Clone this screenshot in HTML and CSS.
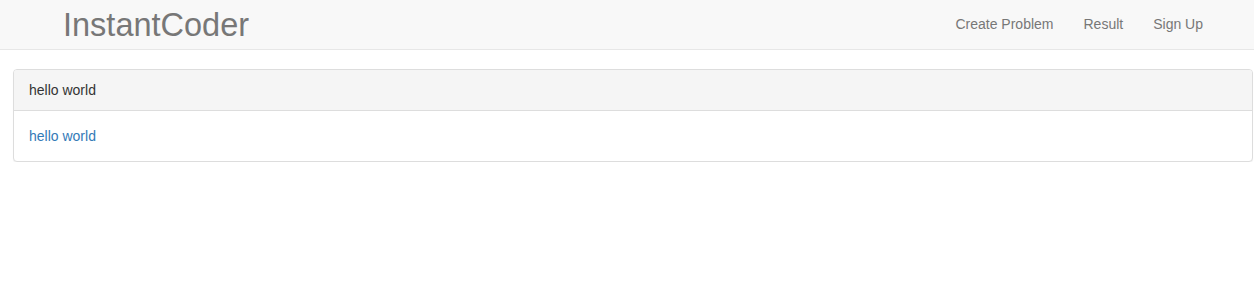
FILE: index.html
```html
<!DOCTYPE html>
<html>
<head>
<meta charset="utf-8">
<link rel="stylesheet" href="styles.css">
</head>
<body>
<nav class="navbar">
  <a class="brand" href="#">InstantCoder</a>
  <ul class="nav">
    <li><a href="#">Create Problem</a></li>
    <li><a href="#">Result</a></li>
    <li><a href="#">Sign Up</a></li>
  </ul>
</nav>
<main class="content">
  <div class="panel">
    <div class="panel-heading">hello world</div>
    <div class="panel-body"><a href="#">hello world</a></div>
  </div>
</main>
</body>
</html>
```
FILE: styles.css
```css
* { box-sizing: border-box; }
html, body { margin: 0; padding: 0; background: #fff; }
body {
  font-family: "Liberation Sans", Arial, sans-serif;
  font-size: 14px;
  line-height: 20px;
  color: #333;
}
a { text-decoration: none; }
.navbar {
  display: flex;
  align-items: center;
  justify-content: space-between;
  height: 50px;
  background: #f8f8f8;
  border-bottom: 1px solid #e7e7e7;
  padding: 0 36px 0 63px;
}
.brand {
  font-size: 32.5px;
  line-height: 40px;
  color: #777;
  margin-top: 1px;
}
.nav {
  display: flex;
  list-style: none;
  margin: 0;
  padding: 0;
}
.nav a {
  display: block;
  padding: 14px 15px 15px;
  color: #777;
}
.content {
  padding: 19px 1px 0 13px;
}
.panel {
  border: 1px solid #ddd;
  border-radius: 4px;
  box-shadow: 0 1px 1px rgba(0,0,0,0.05);
  background: #fff;
}
.panel-heading {
  background: #f5f5f5;
  border-bottom: 1px solid #ddd;
  padding: 10px 15px;
  border-radius: 3px 3px 0 0;
  color: #333;
}
.panel-body {
  padding: 15px;
}
.panel-body a { color: #337ab7; }
```
